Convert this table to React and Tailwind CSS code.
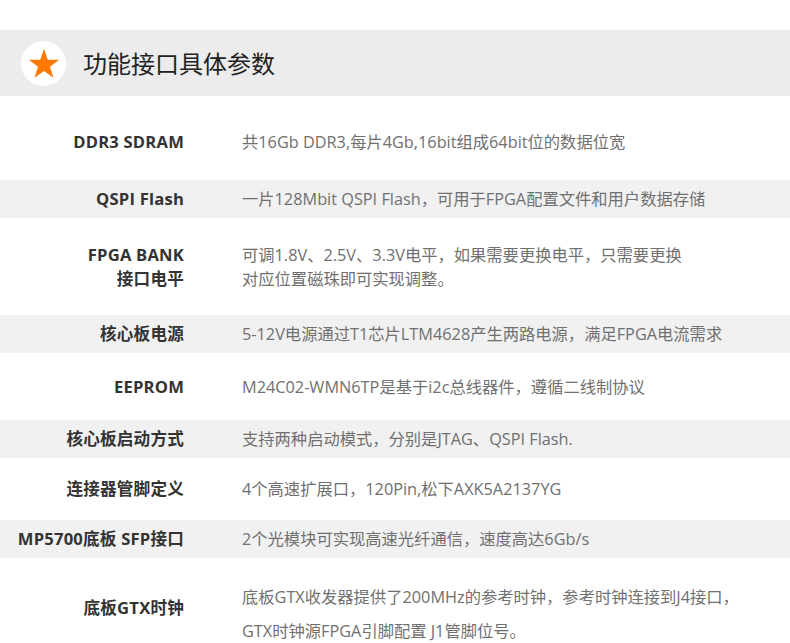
import React from "react";

const rows = [
  { label: ["DDR3 SDRAM"], value: ["共16Gb DDR3,每片4Gb,16bit组成64bit位的数据位宽"], h: "h-[76px]", gray: false },
  { label: ["QSPI Flash"], value: ["一片128Mbit QSPI Flash，可用于FPGA配置文件和用户数据存储"], h: "h-[38px]", gray: true },
  { label: ["FPGA BANK", "接口电平"], value: ["可调1.8V、2.5V、3.3V电平，如果需要更换电平，只需要更换", "对应位置磁珠即可实现调整。"], h: "h-[97px]", gray: false },
  { label: ["核心板电源"], value: ["5-12V电源通过T1芯片LTM4628产生两路电源，满足FPGA电流需求"], h: "h-[38px]", gray: true },
  { label: ["EEPROM"], value: ["M24C02-WMN6TP是基于i2c总线器件，遵循二线制协议"], h: "h-[67px]", gray: false },
  { label: ["核心板启动方式"], value: ["支持两种启动模式，分别是JTAG、QSPI Flash."], h: "h-[38px]", gray: true },
  { label: ["连接器管脚定义"], value: ["4个高速扩展口，120Pin,松下AXK5A2137YG"], h: "h-[62px]", gray: false },
  { label: ["MP5700底板 SFP接口"], value: ["2个光模块可实现高速光纤通信，速度高达6Gb/s"], h: "h-[38px]", gray: true },
];

export default function App() {
  return (
    <div
      className="w-[790px] h-[643px] overflow-hidden bg-white"
      style={{ fontFamily: '"Open Sans", "Noto Sans CJK SC", sans-serif' }}
    >
      <div className="h-[30px]" />
      <div className="h-[66px] bg-[#ececec] flex items-center pl-[21px]">
        <div className="w-[45px] h-[45px] rounded-full bg-white flex items-center justify-center">
          <svg width="32" height="31" viewBox="0 0 24 23">
            <polygon
              points="12,0.5 14.8,8.6 23.4,8.7 16.5,13.9 19.1,22.2 12,17.2 4.9,22.2 7.5,13.9 0.6,8.7 9.2,8.6"
              fill="#ff7800"
            />
          </svg>
        </div>
        <div className="ml-[17px] text-[24px] leading-none text-[#222] mt-[2px]">功能接口具体参数</div>
      </div>
      <div className="h-[8px]" />
      {rows.map((r, i) => (
        <div key={i} className={`${r.h} flex items-center ${r.gray ? "bg-[#f1f1f1]" : "bg-white"}`}>
          <div className="w-[184px] shrink-0 text-right font-bold text-[16.6px] leading-[24px] text-[#333] tracking-[0.2px]">
            {r.label.map((l, j) => (
              <div key={j}>{l}</div>
            ))}
          </div>
          <div className="pl-[58px] text-[16.3px] leading-[24px] text-[#707070]">
            {r.value.map((l, j) => (
              <div key={j}>{l}</div>
            ))}
          </div>
        </div>
      ))}
      <div className="h-[100px] flex items-start bg-white">
        <div className="w-[184px] shrink-0 text-right font-bold text-[16.6px] leading-[24px] text-[#333] tracking-[0.2px] mt-[38px]">
          底板GTX时钟
        </div>
        <div className="pl-[58px] text-[16.3px] leading-[34px] text-[#707070] mt-[22px]">
          <div>底板GTX收发器提供了200MHz的参考时钟，参考时钟连接到J4接口，</div>
          <div>GTX时钟源FPGA引脚配置 J1管脚位号。</div>
        </div>
      </div>
    </div>
  );
}
